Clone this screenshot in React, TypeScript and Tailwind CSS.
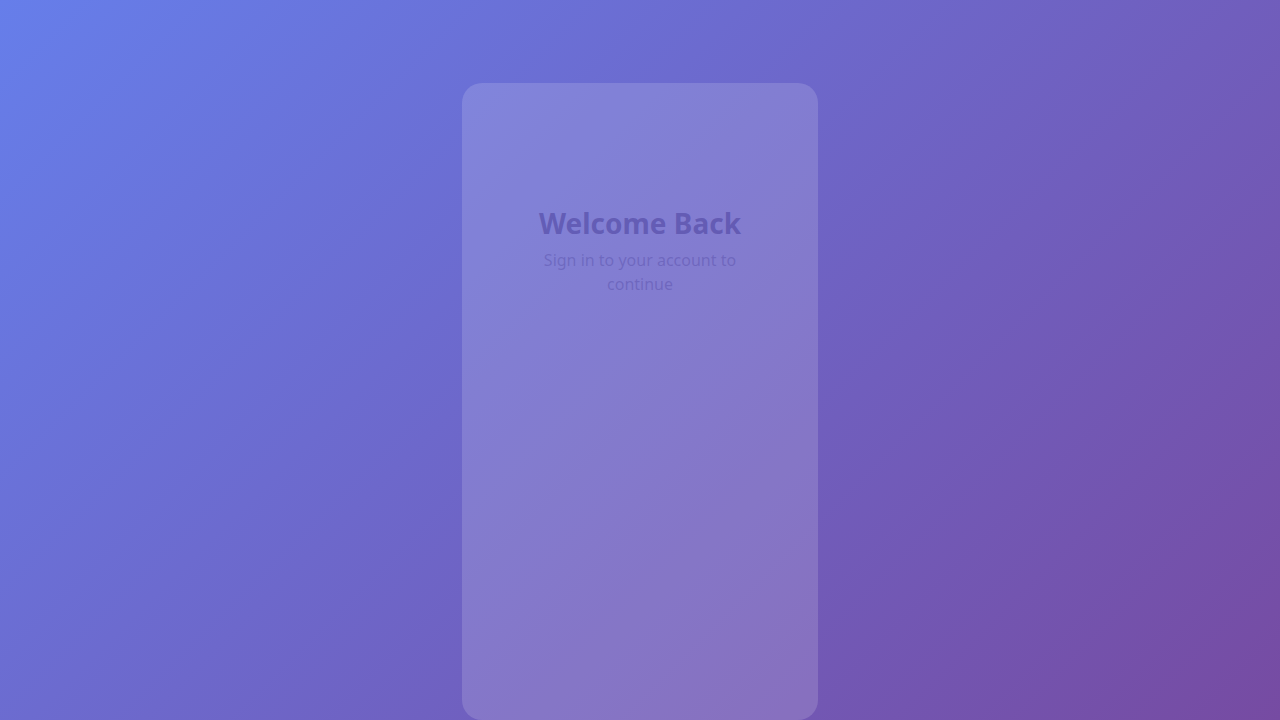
export default function App() {
  return (
    <div
      className="min-h-screen w-full overflow-hidden bg-[linear-gradient(135deg,#667eea_0%,#764ba2_100%)] flex justify-center pt-[83px]"
      style={{ fontFamily: '"Noto Sans", "Open Sans", sans-serif' }}
    >
      <div className="w-[356px] h-[637px] rounded-[20px] bg-white/15 flex flex-col items-center pt-[122px] px-[64px]">
        <h1 className="text-[28px] leading-9 font-bold text-[#4a3f9c]/55 text-center">
          Welcome Back
        </h1>
        <p className="mt-[7px] text-base leading-6 text-[#4a3f9c]/35 text-center">
          Sign in to your account to continue
        </p>
      </div>
    </div>
  );
}
